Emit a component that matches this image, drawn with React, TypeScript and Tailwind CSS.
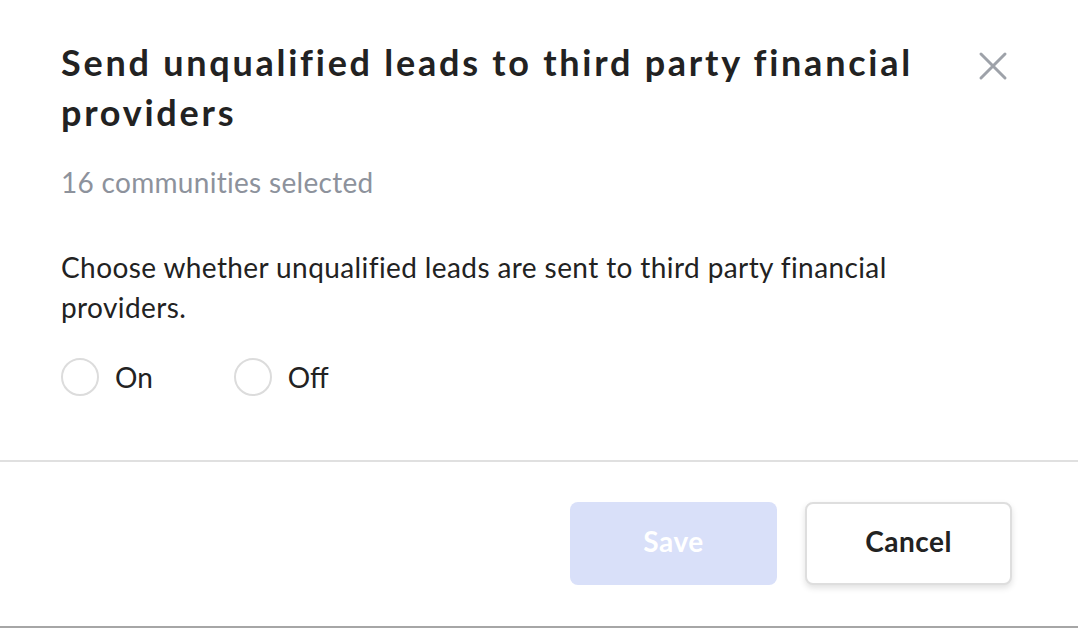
import React from "react";

export default function App() {
  return (
    <div className="w-[1078px] h-[628px] bg-white flex flex-col font-['Lato','Noto_Sans',sans-serif] text-[#222222] overflow-hidden">
      <div className="flex-1 flex flex-col pl-[61px] pr-[70px]">
        <div className="flex justify-between items-start pt-[37px]">
          <h1 className="text-[36px] leading-[50px] font-bold max-w-[880px] tracking-[2.75px]">
            Send unqualified leads to third party financial providers
          </h1>
          <button className="mt-[14px] w-[30px] h-[30px] flex items-center justify-center" aria-label="Close">
            <svg width="30" height="30" viewBox="0 0 30 30">
              <path d="M3 3 L27 27 M27 3 L3 27" stroke="#9ea2a9" strokeWidth="3" strokeLinecap="round" />
            </svg>
          </button>
        </div>
        <div className="mt-[28px] text-[28px] leading-[34px] tracking-[0.3px] text-[#8d929c]">16 communities selected</div>
        <p className="mt-[48px] text-[28px] leading-[40px] tracking-[0.4px] max-w-[860px]">
          Choose whether unqualified leads are sent to third party financial providers.
        </p>
        <div className="mt-[29px] flex items-center gap-[81px]">
          <label className="flex items-center gap-[16px] text-[28px]">
            <span className="w-[38px] h-[38px] rounded-full border-2 border-[#dcdcdc] bg-white" />
            <span>On</span>
          </label>
          <label className="flex items-center gap-[16px] text-[28px]">
            <span className="w-[38px] h-[38px] rounded-full border-2 border-[#dcdcdc] bg-white" />
            <span>Off</span>
          </label>
        </div>
      </div>
      <div className="h-[2px] bg-[#e0e0e0]" />
      <div className="h-[164px] flex items-start justify-end pt-[40px] pr-[66px] gap-[28px]">
        <button className="w-[207px] h-[83px] pb-[6px] rounded-[8px] bg-[#d9e0f9] text-white text-[28px] font-bold tracking-[0.5px]">Save</button>
        <button className="w-[207px] h-[83px] pb-[6px] rounded-[8px] bg-white border-2 border-[#dedede] shadow-[0_3px_6px_rgba(0,0,0,0.12)] text-[#222222] text-[28px] font-bold tracking-[0.5px]">Cancel</button>
      </div>
      <div className="h-[2px] bg-[#a6a6a6]" />
    </div>
  );
}
